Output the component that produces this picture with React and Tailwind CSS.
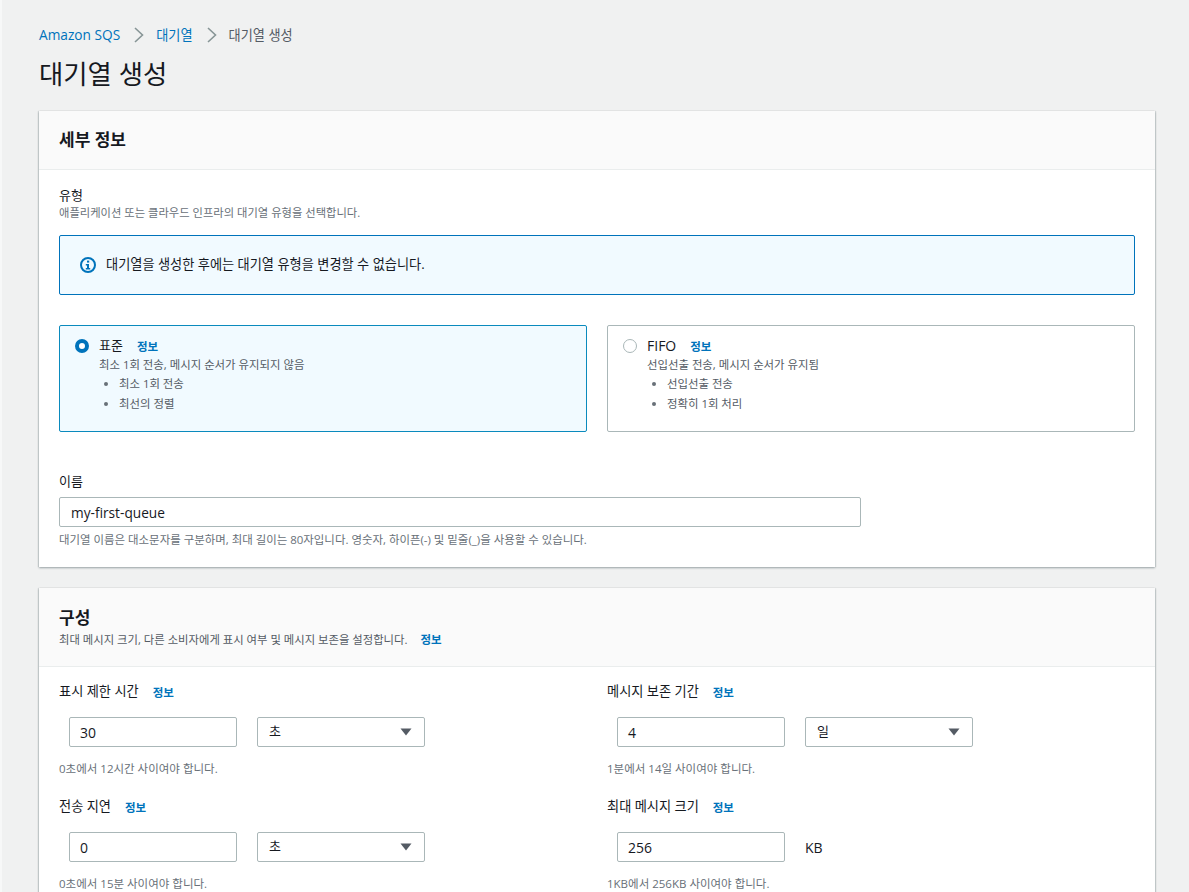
import React from "react";

const fontStack = `"Open Sans", "Noto Sans CJK KR", sans-serif`;

function Info({ className = "" }) {
  return <span className={`pt-[1px] text-[11.5px] leading-[16px] font-bold text-[#0073bb] ${className}`}>정보</span>;
}

function Chevron() {
  return (
    <svg viewBox="0 0 12 16" className="mr-[11px] ml-[13px] h-[16px] w-[12px]" fill="none" stroke="#879596" strokeWidth="1.6">
      <path d="M2 1l7.5 7L2 15" />
    </svg>
  );
}

function InfoIcon() {
  return (
    <svg viewBox="0 0 16 16" className="h-[16px] w-[16px]">
      <circle cx="8" cy="8" r="7" fill="none" stroke="#0073bb" strokeWidth="2" />
      <rect x="7" y="3.6" width="2.2" height="2" fill="#0073bb" />
      <path d="M5.8 7h3.2v4h1.2v1.4H5.8V11H7V8.4H5.8z" fill="#0073bb" />
    </svg>
  );
}

function TextBox({ value }) {
  return (
    <div className="flex h-[30px] w-[168px] items-center rounded-[2px] border border-[#aab7b8] bg-white px-[10px] text-[14px] text-[#16191f]">
      {value}
    </div>
  );
}

function Select({ value }) {
  return (
    <div className="flex h-[30px] w-[168px] items-center justify-between rounded-[2px] border border-[#aab7b8] bg-white pr-[12px] pl-[11px] text-[13px] text-[#16191f]">
      <span className="-mt-[1px]">{value}</span>
      <svg viewBox="0 0 12 8" className="h-[8px] w-[12px]">
        <path d="M0.5 0.5h11L6 7.5z" fill="#545b64" />
      </svg>
    </div>
  );
}

function Field({ label, hint, unit, value }) {
  return (
    <div className="h-[115px]">
      <div className="flex h-[20px] items-center text-[13.2px] text-[#16191f]">
        <span>{label}</span>
        <Info className="ml-[14px]" />
      </div>
      <div className="mt-[15px] ml-[10px] flex items-center gap-[20px]">
        <TextBox value={value} />
        {unit === "KB" ? <span className="text-[14px] text-[#16191f]">KB</span> : <Select value={unit} />}
      </div>
      <p className="mt-[14px] text-[11.5px] leading-[16px] text-[#687078]">{hint}</p>
    </div>
  );
}

function TypeCard({ selected, title, desc, items }) {
  return (
    <div
      className={`h-[107px] w-[528px] rounded-[2px] border pt-[10px] pl-[15px] ${
        selected ? "border-[#0a8abd] bg-[#f1faff]" : "border-[#aab7b8] bg-white"
      }`}
    >
      <div className="flex">
        {selected ? (
          <div className="mt-[3px] h-[14px] w-[14px] shrink-0 rounded-full border-[4px] border-[#0073bb] bg-white" />
        ) : (
          <div className="mt-[3px] h-[14px] w-[14px] shrink-0 rounded-full border border-[#aab7b8] bg-white" />
        )}
        <div className="ml-[10px]">
          <div className="flex h-[20px] items-center text-[13px] text-[#16191f]">
            <span className={title === "FIFO" ? "-mt-[2px] text-[14px]" : ""}>{title}</span>
            <Info className="ml-[14px]" />
          </div>
          <p className="mt-[1px] text-[11.4px] leading-[16px] text-[#545b64]">{desc}</p>
          <ul className="mt-[1px] list-disc pl-[20px] text-[11.4px] leading-[20px] text-[#545b64] marker:text-[#687078]">
            {items.map((item) => (
              <li key={item}>{item}</li>
            ))}
          </ul>
        </div>
      </div>
    </div>
  );
}

export default function App() {
  return (
    <div
      className="h-[892px] overflow-hidden border-l-2 border-[#f7f8f8] bg-[#f0f1f1] pr-[34px] pl-[37px]"
      style={{ fontFamily: fontStack }}
    >
      <nav className="flex h-[70px] items-center text-[13.2px] text-[#545b64]">
        <span className="text-[13.7px] text-[#0073bb]">Amazon SQS</span>
        <Chevron />
        <span className="pt-[1px] text-[#0073bb]">대기열</span>
        <Chevron />
        <span className="pt-[1px]">대기열 생성</span>
      </nav>
      <h1 className="h-[41px] text-[26.4px] leading-[9px] text-[#16191f]">대기열 생성</h1>

      <section className="h-[456px] bg-white shadow-[0_1px_2px_rgba(0,28,36,0.35),1px_0_1px_rgba(0,28,36,0.1),-1px_0_1px_rgba(0,28,36,0.1)]">
        <div className="flex h-[59px] items-center border-b border-[#eaeded] bg-[#fafafa] px-[20px]">
          <h2 className="text-[17px] font-bold text-[#16191f]">세부 정보</h2>
        </div>
        <div className="px-[20px] pt-[16px]">
          <div className="text-[13px] leading-[18px] text-[#16191f]">유형</div>
          <p className="mt-[2px] text-[11.3px] leading-[14px] text-[#687078]">애플리케이션 또는 클라우드 인프라의 대기열 유형을 선택합니다.</p>
          <div className="mt-[15px] flex h-[60px] items-center rounded-[2px] border border-[#0073bb] bg-[#f1faff] pl-[20px] text-[13.2px] text-[#16191f]">
            <InfoIcon />
            <span className="ml-[10px]">대기열을 생성한 후에는 대기열 유형을 변경할 수 없습니다.</span>
          </div>
          <div className="mt-[30px] flex justify-between">
            <TypeCard
              selected
              title="표준"
              desc="최소 1회 전송, 메시지 순서가 유지되지 않음"
              items={["최소 1회 전송", "최선의 정렬"]}
            />
            <TypeCard
              title="FIFO"
              desc="선입선출 전송, 메시지 순서가 유지됨"
              items={["선입선출 전송", "정확히 1회 처리"]}
            />
          </div>
          <div className="mt-[39px] text-[13px] leading-[20px] text-[#16191f]">이름</div>
          <div className="mt-[6px] flex h-[30px] w-[802px] items-center rounded-[2px] border border-[#aab7b8] bg-white px-[11px] pt-[2px] text-[13.7px] text-[#16191f]">
            my-first-queue
          </div>
          <p className="mt-[5px] text-[11.45px] leading-[16px] text-[#687078]">
            대기열 이름은 대소문자를 구분하며, 최대 길이는 80자입니다. 영숫자, 하이픈(-) 및 밑줄(_)을 사용할 수 있습니다.
          </p>
        </div>
      </section>

      <section className="mt-[21px] h-[400px] bg-white shadow-[0_1px_2px_rgba(0,28,36,0.35),1px_0_1px_rgba(0,28,36,0.1),-1px_0_1px_rgba(0,28,36,0.1)]">
        <div className="h-[79px] border-b border-[#eaeded] bg-[#fafafa] px-[20px] pt-[17px]">
          <h2 className="text-[17px] leading-[26px] font-bold text-[#16191f]">구성</h2>
          <p className="flex items-center text-[11.35px] leading-[16px] text-[#545b64]">
            최대 메시지 크기, 다른 소비자에게 표시 여부 및 메시지 보존을 설정합니다.
            <Info className="ml-[13px]" />
          </p>
        </div>
        <div className="grid grid-cols-[548px_1fr] px-[20px] pt-[15px]">
          <Field label="표시 제한 시간" value="30" unit="초" hint="0초에서 12시간 사이여야 합니다." />
          <Field label="메시지 보존 기간" value="4" unit="일" hint="1분에서 14일 사이여야 합니다." />
          <Field label="전송 지연" value="0" unit="초" hint="0초에서 15분 사이여야 합니다." />
          <Field label="최대 메시지 크기" value="256" unit="KB" hint="1KB에서 256KB 사이여야 합니다." />
        </div>
      </section>
    </div>
  );
}
